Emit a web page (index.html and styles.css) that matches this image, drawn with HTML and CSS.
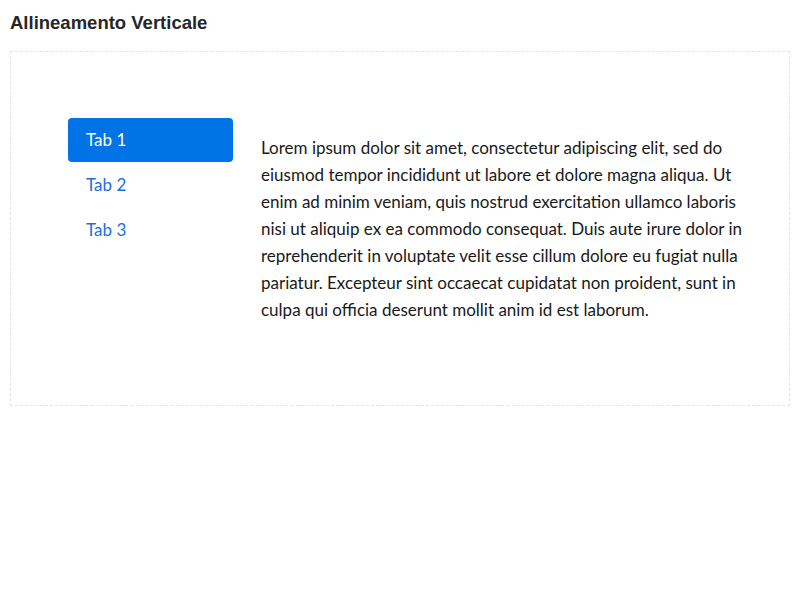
FILE: index.html
```html
<!DOCTYPE html>
<html lang="it">
<head>
<meta charset="utf-8">
<title>Allineamento Verticale</title>
<link rel="stylesheet" href="styles.css">
</head>
<body>
  <h1 class="title">Allineamento Verticale</h1>
  <div class="demo">
    <div class="tabs-row">
      <ul class="nav-tabs">
        <li><a class="nav-link active" href="#">Tab 1</a></li>
        <li><a class="nav-link" href="#">Tab 2</a></li>
        <li><a class="nav-link" href="#">Tab 3</a></li>
      </ul>
      <div class="tab-content">
        <p>Lorem ipsum dolor sit amet, consectetur adipiscing elit, sed do eiusmod tempor incididunt ut labore et dolore magna aliqua. Ut enim ad minim veniam, quis nostrud exercitation ullamco laboris nisi ut aliquip ex ea commodo consequat. Duis aute irure dolor in reprehenderit in voluptate velit esse cillum dolore eu fugiat nulla pariatur. Excepteur sint occaecat cupidatat non proident, sunt in culpa qui officia deserunt mollit anim id est laborum.</p>
      </div>
    </div>
  </div>
</body>
</html>
```

FILE: styles.css
```css
html, body {
  margin: 0;
  padding: 0;
  background: #ffffff;
}

body {
  padding: 10px;
  font-family: "Lato", "Liberation Sans", sans-serif;
  color: #19191a;
}

.title {
  margin: 1px 0 16px 0;
  font-family: "Liberation Sans", Arial, sans-serif;
  font-size: 18.5px;
  font-weight: bold;
  line-height: 24px;
  color: #262626;
}

.demo {
  border: 1px dashed #e3e3e3;
  padding: 66px 30px 66px 57px;
}

.tabs-row {
  display: flex;
  align-items: flex-start;
  gap: 28px;
}

.nav-tabs {
  list-style: none;
  margin: 0;
  padding: 0;
  width: 165px;
  flex: none;
  display: flex;
  flex-direction: column;
  gap: 1px;
}

.nav-link {
  display: block;
  height: 44px;
  line-height: 44px;
  padding: 0 18px;
  border-radius: 4px;
  font-size: 17px;
  color: #1a6fe0;
  text-decoration: none;
}

.nav-link.active {
  background: #0073e6;
  color: #ffffff;
}

.tab-content {
  flex: 0 0 490px;
  padding-top: 16px;
}

.tab-content p {
  margin: 0 0 16px 0;
  font-size: 17px;
  line-height: 27px;
  color: #19191a;
}
```
